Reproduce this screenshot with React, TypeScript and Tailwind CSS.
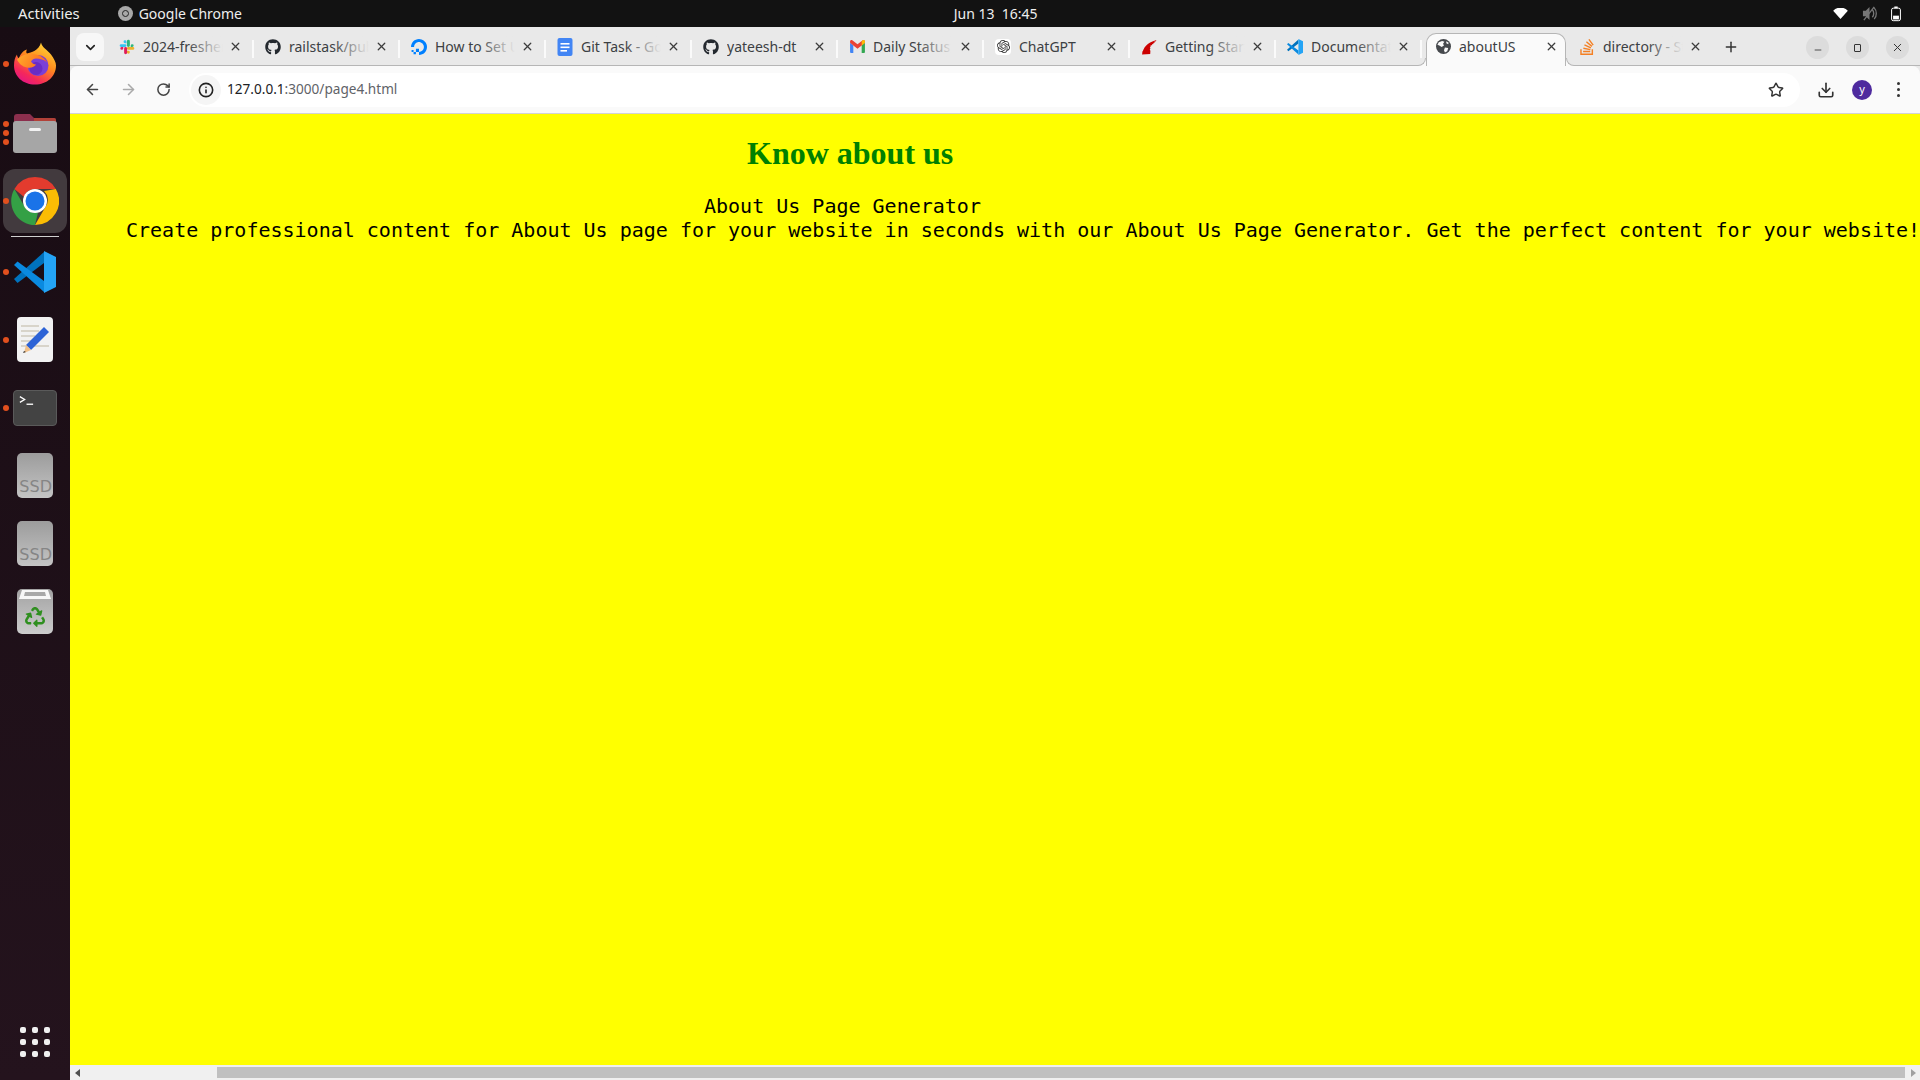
import React from 'react';
import { ArrowLeft, ArrowRight, RotateCw, Star, Download, X, Plus, ChevronDown, Minus, Info } from 'lucide-react';
import { FaGithub, FaRecycle } from 'react-icons/fa';
import { SiDigitalocean, SiOpenai, SiStackoverflow } from 'react-icons/si';

const SlackIcon = () => (
  <svg viewBox="0 0 24 24" className="w-4 h-4">
    <path fill="#36c5f0" d="M9 2a2.2 2.2 0 0 0 0 4.4h2.2V4.2A2.2 2.2 0 0 0 9 2zM3.2 7.7a2.2 2.2 0 0 0 0 4.4H9a2.2 2.2 0 0 0 0-4.4z" />
    <path fill="#2eb67d" d="M22 9.9a2.2 2.2 0 0 0-4.4 0v2.2h2.2A2.2 2.2 0 0 0 22 9.9zM16.3 9.9V3.2a2.2 2.2 0 0 0-4.4 0v6.7a2.2 2.2 0 0 0 4.4 0z" />
    <path fill="#ecb22e" d="M14.1 22a2.2 2.2 0 0 0 0-4.4h-2.2v2.2a2.2 2.2 0 0 0 2.2 2.2zM14.1 16.3h6.7a2.2 2.2 0 0 0 0-4.4h-6.7a2.2 2.2 0 0 0 0 4.4z" />
    <path fill="#e01e5a" d="M2 14.1a2.2 2.2 0 0 0 4.4 0v-2.2H4.2A2.2 2.2 0 0 0 2 14.1zM7.7 14.1v6.7a2.2 2.2 0 0 0 4.4 0v-6.7a2.2 2.2 0 0 0-4.4 0z" />
  </svg>
);

const DocsIcon = () => (
  <svg viewBox="0 0 16 18" className="w-4 h-[18px]">
    <rect x="0.5" y="0" width="15" height="18" rx="2" fill="#4285f4" />
    <rect x="3.5" y="5" width="9" height="1.6" fill="#fff" />
    <rect x="3.5" y="8.5" width="9" height="1.6" fill="#fff" />
    <rect x="3.5" y="12" width="6.5" height="1.6" fill="#fff" />
  </svg>
);

const GmailIcon = () => (
  <svg viewBox="0 0 16 14" className="w-[15px] h-[13px]">
    <path fill="#4285f4" d="M0 3v10a1 1 0 0 0 1 1h2.5V6z" />
    <path fill="#34a853" d="M16 3v10a1 1 0 0 1-1 1h-2.5V6z" />
    <path fill="#ea4335" d="M0 1.5C0 .3 1.4-.4 2.4.3L8 4.6 13.6.3c1-.7 2.4 0 2.4 1.2V3l-3.5 3L8 9.4 3.5 6 0 3z" />
    <path fill="#fbbc04" d="M12.5 6V1.6l1.1-1.3c1-.7 2.4 0 2.4 1.2V3z" />
  </svg>
);

const RailsIcon = () => (
  <svg viewBox="0 0 16 16" className="w-4 h-4">
    <path fill="#cc0000" d="M1 15.5c.6-3.4 1.8-6.5 4-8.8C7.2 4.3 10.4 2.4 15.5 1l-1 1.6-1.3.2.6.9-1.6.3.4 1-1.6.2.1 1-1.5.1.2 1.2-1 .6.6 1.2-.6 1.4.6 1.1-.2 3.1z" />
    <circle cx="2.5" cy="13" r="1" fill="#cc0000" />
    <circle cx="5" cy="9" r="0.8" fill="#cc0000" />
  </svg>
);

const VsCodeIcon = ({ size }: { size: number }) => (
  <svg viewBox="0 0 42 42" width={size} height={size}>
    <path fill="#0072bd" d="M0 28 30 1v11L3.5 32z" />
    <path fill="#0a8ae0" d="M0 14l3.5-3.5L30 30v11z" />
    <path fill="#24a4f5" d="M30 0l12 6v30l-12 6z" />
  </svg>
);

const GlobeIcon = () => (
  <svg viewBox="0 0 16 16" className="w-[15px] h-[15px]">
    <circle cx="8" cy="8" r="8" fill="#46494d" />
    <path fill="#fafafa" d="M3 3.5 6.5 2 9 3 7.5 5 8.5 7 6 8.5 3.5 7 1.5 6zM9.5 9l3.5.5-1 3.5-2.5 1.5L8.5 12zM11 2.5l2.5 1.5L13 5.5 11 4.5z" />
  </svg>
);

const tabs: { title: string; icon: React.ReactNode; active?: boolean; fade?: boolean }[] = [
  { title: '2024-freshers', icon: <SlackIcon />, fade: true },
  { title: 'railstask/public', icon: <FaGithub className="w-4 h-4 text-[#24292f]" />, fade: true },
  { title: 'How to Set Up', icon: <SiDigitalocean className="w-4 h-4 text-[#0080ff]" />, fade: true },
  { title: 'Git Task - Google', icon: <DocsIcon />, fade: true },
  { title: 'yateesh-dt', icon: <FaGithub className="w-4 h-4 text-[#24292f]" /> },
  { title: 'Daily Status', icon: <GmailIcon />, fade: true },
  { title: 'ChatGPT', icon: <span className="w-4 h-4 bg-white rounded-sm flex items-center justify-center"><SiOpenai className="w-[13px] h-[13px] text-[#333]" /></span> },
  { title: 'Getting Started', icon: <RailsIcon />, fade: true },
  { title: 'Documentation', icon: <VsCodeIcon size={16} />, fade: true },
  { title: 'aboutUS', icon: <GlobeIcon />, active: true },
  { title: 'directory - Stack', icon: <SiStackoverflow className="w-4 h-4 text-[#f48024]" />, fade: true },
];

const Tab = ({ title, icon, active, fade, last }: { title: string; icon: React.ReactNode; active?: boolean; fade?: boolean; last: boolean }) => (
  <div
    className={
      active
        ? 'relative z-10 ml-[4px] mr-[2px] mt-[6px] w-[140px] h-[33px] shrink-0 flex items-center pl-[8px] pb-[7px] bg-[#fafafa] border border-b-0 border-[#b6b6b6] rounded-t-[10px]'
        : 'relative w-[146px] h-[39px] shrink-0 flex items-center pl-[11px]'
    }
  >
    <span className="w-4 h-[18px] shrink-0 flex items-center justify-center">{icon}</span>
    <span className="relative ml-2 w-[80px] overflow-hidden whitespace-nowrap text-[14px] text-[#3c4043]">
      {title}
      {fade && <span className="absolute right-0 top-0 bottom-0 w-9 bg-gradient-to-r from-transparent to-[#e9e9e9]" />}
    </span>
    <X className="ml-[6px] w-[13px] h-[13px] text-[#3c3c3c] shrink-0" strokeWidth={2.4} />
    {!active && !last && <span className="absolute right-0 top-[13px] w-[2px] h-[18px] bg-[#fafafa]" />}
    {active && (
      <>
        <span className="absolute -left-[9px] bottom-0 w-2 h-2 bg-[#fafafa]">
          <span className="block w-full h-full rounded-br-[8px] bg-[#e9e9e9] border-r border-b border-[#b6b6b6]" />
        </span>
        <span className="absolute -right-[9px] bottom-0 w-2 h-2 bg-[#fafafa]">
          <span className="block w-full h-full rounded-bl-[8px] bg-[#e9e9e9] border-l border-b border-[#b6b6b6]" />
        </span>
      </>
    )}
  </div>
);

const FirefoxIcon = () => (
  <svg viewBox="0 0 42 42" className="w-[42px] h-[43px]">
    <defs>
      <linearGradient id="ff1" x1="0.85" y1="0" x2="0.25" y2="1">
        <stop offset="0" stopColor="#ffe03a" />
        <stop offset="0.45" stopColor="#ff8a1e" />
        <stop offset="0.8" stopColor="#f5285a" />
        <stop offset="1" stopColor="#e31587" />
      </linearGradient>
      <linearGradient id="ff2" x1="0" y1="0" x2="1" y2="0.3">
        <stop offset="0" stopColor="#ffb02b" />
        <stop offset="1" stopColor="#ff6a1e" />
      </linearGradient>
    </defs>
    <path fill="url(#ff1)" d="M27 0c1 5 6 7 10 12 3 4 5 8 5 11 0 11-9 19-21 19S0 34 0 23c0-5 1-8 3-11 0 2 1 3 2 4 1-4 4-8 8-9-1 2-1 3 0 4 4-1 12-3 14-11z" />
    <circle cx="24" cy="23" r="10.5" fill="#7a3fd6" />
    <circle cx="22" cy="26" r="6.5" fill="#6a2cc4" />
    <path fill="url(#ff2)" d="M3 17c5-5 12-7 19-5 5 1 9 4 11 8-3-3-7-4-11-4-2 0-4 1-5 3 1 2 3 3 5 3-1 2-5 4-9 3-5-1-8-4-10-8z" />
  </svg>
);

const FilesIcon = () => (
  <svg viewBox="0 0 44 40" className="w-11 h-10">
    <path fill="#8c2f4d" d="M1 4a3 3 0 0 1 3-3h13l4 4h20a2 2 0 0 1 2 2v10H1z" />
    <path fill="#c2482f" d="M21 5h20a2 2 0 0 1 2 2v10H21z" opacity="0.7" />
    <rect x="0" y="8" width="44" height="32" rx="3" fill="#a6a6a6" />
    <rect x="16" y="15" width="12" height="3" rx="1.5" fill="#f2f2f2" />
  </svg>
);

const ChromeIcon = () => (
  <svg viewBox="0 0 48 48" className="w-12 h-12">
    <path fill="#e33b2e" d="M24 0a24 24 0 0 1 20.8 12H24a12 12 0 0 0-11.2 7.7L3.4 12A24 24 0 0 1 24 0z" />
    <path fill="#fbbc04" d="M44.8 12A24 24 0 0 1 24 48l10.4-18A12 12 0 0 0 33 14z" />
    <path fill="#34a045" d="M3.4 12l10.4 18A12 12 0 0 0 27 35.6L24 48A24 24 0 0 1 3.4 12z" />
    <circle cx="24" cy="24" r="12" fill="#fff" />
    <circle cx="24" cy="24" r="9.5" fill="#1a73e8" />
  </svg>
);

const EditorIcon = () => (
  <svg viewBox="0 0 36 45" className="w-9 h-[45px]">
    <rect width="36" height="45" rx="4" fill="#f2f2f2" />
    <path stroke="#cfcabd" strokeWidth="1.6" d="M4 9h18M4 14h18M4 19h14M4 24h12M4 29h10M14 29h18" />
    <path fill="#2d63d6" d="M27 10l5 5-18 18-5-5z" />
    <path fill="#f0c08a" d="M9 28l5 5-7 3z" />
    <path fill="#333" d="M7 34l2 1-3 1z" />
  </svg>
);

const TerminalIcon = () => (
  <div className="w-11 h-9 rounded bg-[#434343] border border-[#5a5a5a] relative">
    <svg viewBox="0 0 44 36" className="w-full h-full">
      <path d="M6 6l5 3-5 3" stroke="#fff" strokeWidth="1.4" fill="none" />
      <path d="M13 14h7" stroke="#fff" strokeWidth="1.4" />
    </svg>
  </div>
);

const SsdIcon = () => (
  <div className="w-9 h-[45px] rounded-[5px] bg-gradient-to-b from-[#9c9c9c] to-[#c4c4c4] flex items-end justify-end overflow-hidden pr-[1px]">
    <span className="text-[16px] leading-[22px] text-[#858585] font-['DejaVu_Sans',sans-serif]">SSD</span>
  </div>
);

const TrashIcon = () => (
  <div className="relative w-9 h-[45px] rounded-[5px] bg-gradient-to-b from-[#a3a3a3] to-[#cccccc] flex items-end justify-center pb-[7px] overflow-hidden">
    <svg viewBox="0 0 36 10" className="absolute left-0 top-0 w-9 h-[10px]">
      <path fill="#f7f7f7" d="M5 1h26l3 9H2z" />
      <path fill="#a8a8a8" d="M8 3h20l1 4H7z" />
    </svg>
    <FaRecycle className="w-[20px] h-[20px] text-[#2f8f1f]" />
  </div>
);

const RunDots = ({ n }: { n: number }) => (
  <div className="absolute left-[3px] top-0 bottom-0 flex flex-col justify-center gap-[3px]">
    {Array.from({ length: n }).map((_, i) => (
      <span key={i} className="w-[6px] h-[6px] rounded-full bg-[#e2501e]" />
    ))}
  </div>
);

const DockItem = ({ children, dots = 0, className = '' }: { children: React.ReactNode; dots?: number; className?: string }) => (
  <div className={`relative w-[70px] flex items-center justify-center ${className}`}>
    {dots > 0 && <RunDots n={dots} />}
    {children}
  </div>
);

const Dock = () => (
  <aside className="w-[70px] shrink-0 bg-gradient-to-b from-[#180c13] to-[#24131d] flex flex-col items-center pt-[15px]">
    <DockItem dots={1} className="h-[43px]"><FirefoxIcon /></DockItem>
    <DockItem dots={3} className="h-10 mt-[28px]"><FilesIcon /></DockItem>
    <DockItem dots={1} className="h-16 mt-[16px]">
      <div className="w-16 h-16 rounded-xl bg-[#423a3e] flex items-center justify-center"><ChromeIcon /></div>
    </DockItem>
    <div className="w-12 h-px bg-[#cfcfcf] mt-[3px]" />
    <DockItem dots={1} className="h-[42px] mt-[14px]"><VsCodeIcon size={42} /></DockItem>
    <DockItem dots={1} className="h-[45px] mt-[24px]"><EditorIcon /></DockItem>
    <DockItem dots={1} className="h-9 mt-[28px]"><TerminalIcon /></DockItem>
    <DockItem className="h-[45px] mt-[27px]"><SsdIcon /></DockItem>
    <DockItem className="h-[45px] mt-[23px]"><SsdIcon /></DockItem>
    <DockItem className="h-[45px] mt-[23px]"><TrashIcon /></DockItem>
    <div className="mt-auto mb-[23px] grid grid-cols-3 gap-[6px]">
      {Array.from({ length: 9 }).map((_, i) => (
        <span key={i} className="w-[6px] h-[6px] rounded-[2px] bg-[#f0f0f0]" />
      ))}
    </div>
  </aside>
);

const TopBar = () => (
  <header className="h-[27px] shrink-0 bg-[#121212] text-[#eeeeee] text-[14px] flex items-center font-['Noto_Sans',sans-serif]">
    <span className="ml-[18px] text-[14.8px]">Activities</span>
    <span className="ml-[38px] w-[15px] h-[15px] rounded-full bg-[#a8a8a8] flex items-center justify-center">
      <span className="w-[7px] h-[7px] rounded-full border border-[#222]" />
    </span>
    <span className="ml-[6px] w-[815px]">Google Chrome</span>
    <span>Jun 13&nbsp;&nbsp;16:45</span>
    <div className="ml-auto mr-[19px] flex items-center gap-[14px]">
      <svg viewBox="0 0 16 12" className="w-[15px] h-[11px]"><path fill="#fff" d="M0 3a11 11 0 0 1 16 0L8 12z" /></svg>
      <svg viewBox="0 0 16 16" className="w-[15px] h-[15px]">
        <path fill="#777" d="M1 5h3l4-4v14l-4-4H1z" />
        <path stroke="#777" strokeWidth="1.4" fill="none" d="M11 4c2 2 2 6 0 8M13 2c3 3 3 9 0 12M2 15 13 1" />
      </svg>
      <svg viewBox="0 0 12 18" className="w-[10px] h-[18px]">
        <rect x="0.7" y="2" width="10.6" height="15" rx="2" fill="none" stroke="#fff" strokeWidth="1.2" />
        <rect x="4" y="0" width="4" height="2" fill="#fff" />
        <rect x="2.5" y="11" width="7" height="4.5" fill="#fff" />
      </svg>
    </div>
  </header>
);

const WindowButton = ({ children }: { children: React.ReactNode }) => (
  <span className="w-[23px] h-[23px] rounded-full bg-[#dcdcdc] flex items-center justify-center text-[#333]">{children}</span>
);

const TabStrip = () => (
  <div className="h-[39px] shrink-0 bg-[#e9e9e9] flex items-start pl-[6px] relative">
    <span className="mt-[6px] w-7 h-7 rounded-lg bg-[#f7f7f7] flex items-center justify-center shrink-0">
      <ChevronDown className="w-[15px] h-[15px] text-[#222]" strokeWidth={2.6} />
    </span>
    <div className="flex items-start ml-[4px]">
      {tabs.map((t, i) => (
        <Tab key={i} title={t.title} icon={t.icon} active={t.active} fade={t.fade} last={i === tabs.length - 1} />
      ))}
    </div>
    <Plus className="ml-[9px] mt-[12px] w-[16px] h-[16px] text-[#333] shrink-0" strokeWidth={2.2} />
    <div className="ml-auto mr-[11px] mt-[9px] flex gap-[17px]">
      <WindowButton><Minus className="w-[10px] h-[10px] mt-1" strokeWidth={2} /></WindowButton>
      <WindowButton><span className="w-[7px] h-[8px] border border-[#333] rounded-[1px]" /></WindowButton>
      <WindowButton><X className="w-[13px] h-[13px]" strokeWidth={1.8} /></WindowButton>
    </div>
    <span className="absolute left-0 right-0 bottom-0 h-px bg-[#b6b6b6]" />
  </div>
);

const Toolbar = () => (
  <div className="h-[48px] shrink-0 bg-[#fafafa] border-b border-[#d3d3d3] flex items-center rounded-t-[8px]">
    <ArrowLeft className="ml-[14px] w-[17px] h-[17px] text-[#444]" strokeWidth={2.2} />
    <ArrowRight className="ml-[19px] w-[17px] h-[17px] text-[#aaa]" strokeWidth={2.2} />
    <RotateCw className="ml-[19px] w-[15px] h-[15px] text-[#444]" strokeWidth={2.4} />
    <div className="ml-[18px] h-[34px] w-[1611px] rounded-full bg-white flex items-center pl-[2px]">
      <span className="w-[30px] h-[30px] rounded-full bg-[#f5f5f5] flex items-center justify-center">
        <Info className="w-[16px] h-[16px] text-[#222]" strokeWidth={2.4} />
      </span>
      <span className="ml-[6px] text-[13.6px] text-[#202124]">127.0.0.1<span className="text-[#5f6368]">:3000/page4.html</span></span>
      <Star className="ml-auto mr-[16px] w-[16px] h-[16px] text-[#333]" strokeWidth={2.2} />
    </div>
    <Download className="ml-[17px] w-[18px] h-[18px] text-[#333]" strokeWidth={2.2} />
    <span className="ml-[17px] w-5 h-5 rounded-full bg-[#4e2a9e] text-white text-[11px] leading-[18px] text-center">y</span>
    <span className="ml-[25px] flex flex-col gap-[3px]">
      <span className="w-[3px] h-[3px] rounded-full bg-[#333]" />
      <span className="w-[3px] h-[3px] rounded-full bg-[#333]" />
      <span className="w-[3px] h-[3px] rounded-full bg-[#333]" />
    </span>
  </div>
);

const Page = () => (
  <main className="flex-1 bg-[#ffff00] overflow-hidden whitespace-nowrap">
    <h1 className="mt-[21px] ml-[677px] text-[32px] leading-[37px] font-bold text-[#008000] font-['Liberation_Serif',serif]">Know about us</h1>
    <div className="mt-[22px] text-[20px] leading-[24px] text-black font-['DejaVu_Sans_Mono',monospace]">
      <p className="ml-[634px]">About Us Page Generator</p>
      <p className="ml-[56px]">Create professional content for About Us page for your website in seconds with our About Us Page Generator. Get the perfect content for your website!</p>
    </div>
  </main>
);

const ScrollBar = () => (
  <div className="h-[15px] shrink-0 bg-[#f0f0f0] flex items-center">
    <span className="ml-[5px] w-0 h-0 border-y-[4px] border-y-transparent border-r-[5px] border-r-[#505050]" />
    <span className="ml-[137px] w-[1688px] h-[11px] bg-[#c0c0c0]" />
    <span className="ml-[6px] w-0 h-0 border-y-[4px] border-y-transparent border-l-[5px] border-l-[#a0a0a0]" />
  </div>
);

export default function App() {
  return (
    <div className="w-[1920px] h-[1080px] flex flex-col overflow-hidden font-['Noto_Sans',sans-serif]">
      <TopBar />
      <div className="flex-1 flex min-h-0">
        <Dock />
        <div className="flex-1 min-w-0 flex flex-col bg-[#e9e9e9]">
          <TabStrip />
          <Toolbar />
          <Page />
          <ScrollBar />
        </div>
      </div>
    </div>
  );
}
